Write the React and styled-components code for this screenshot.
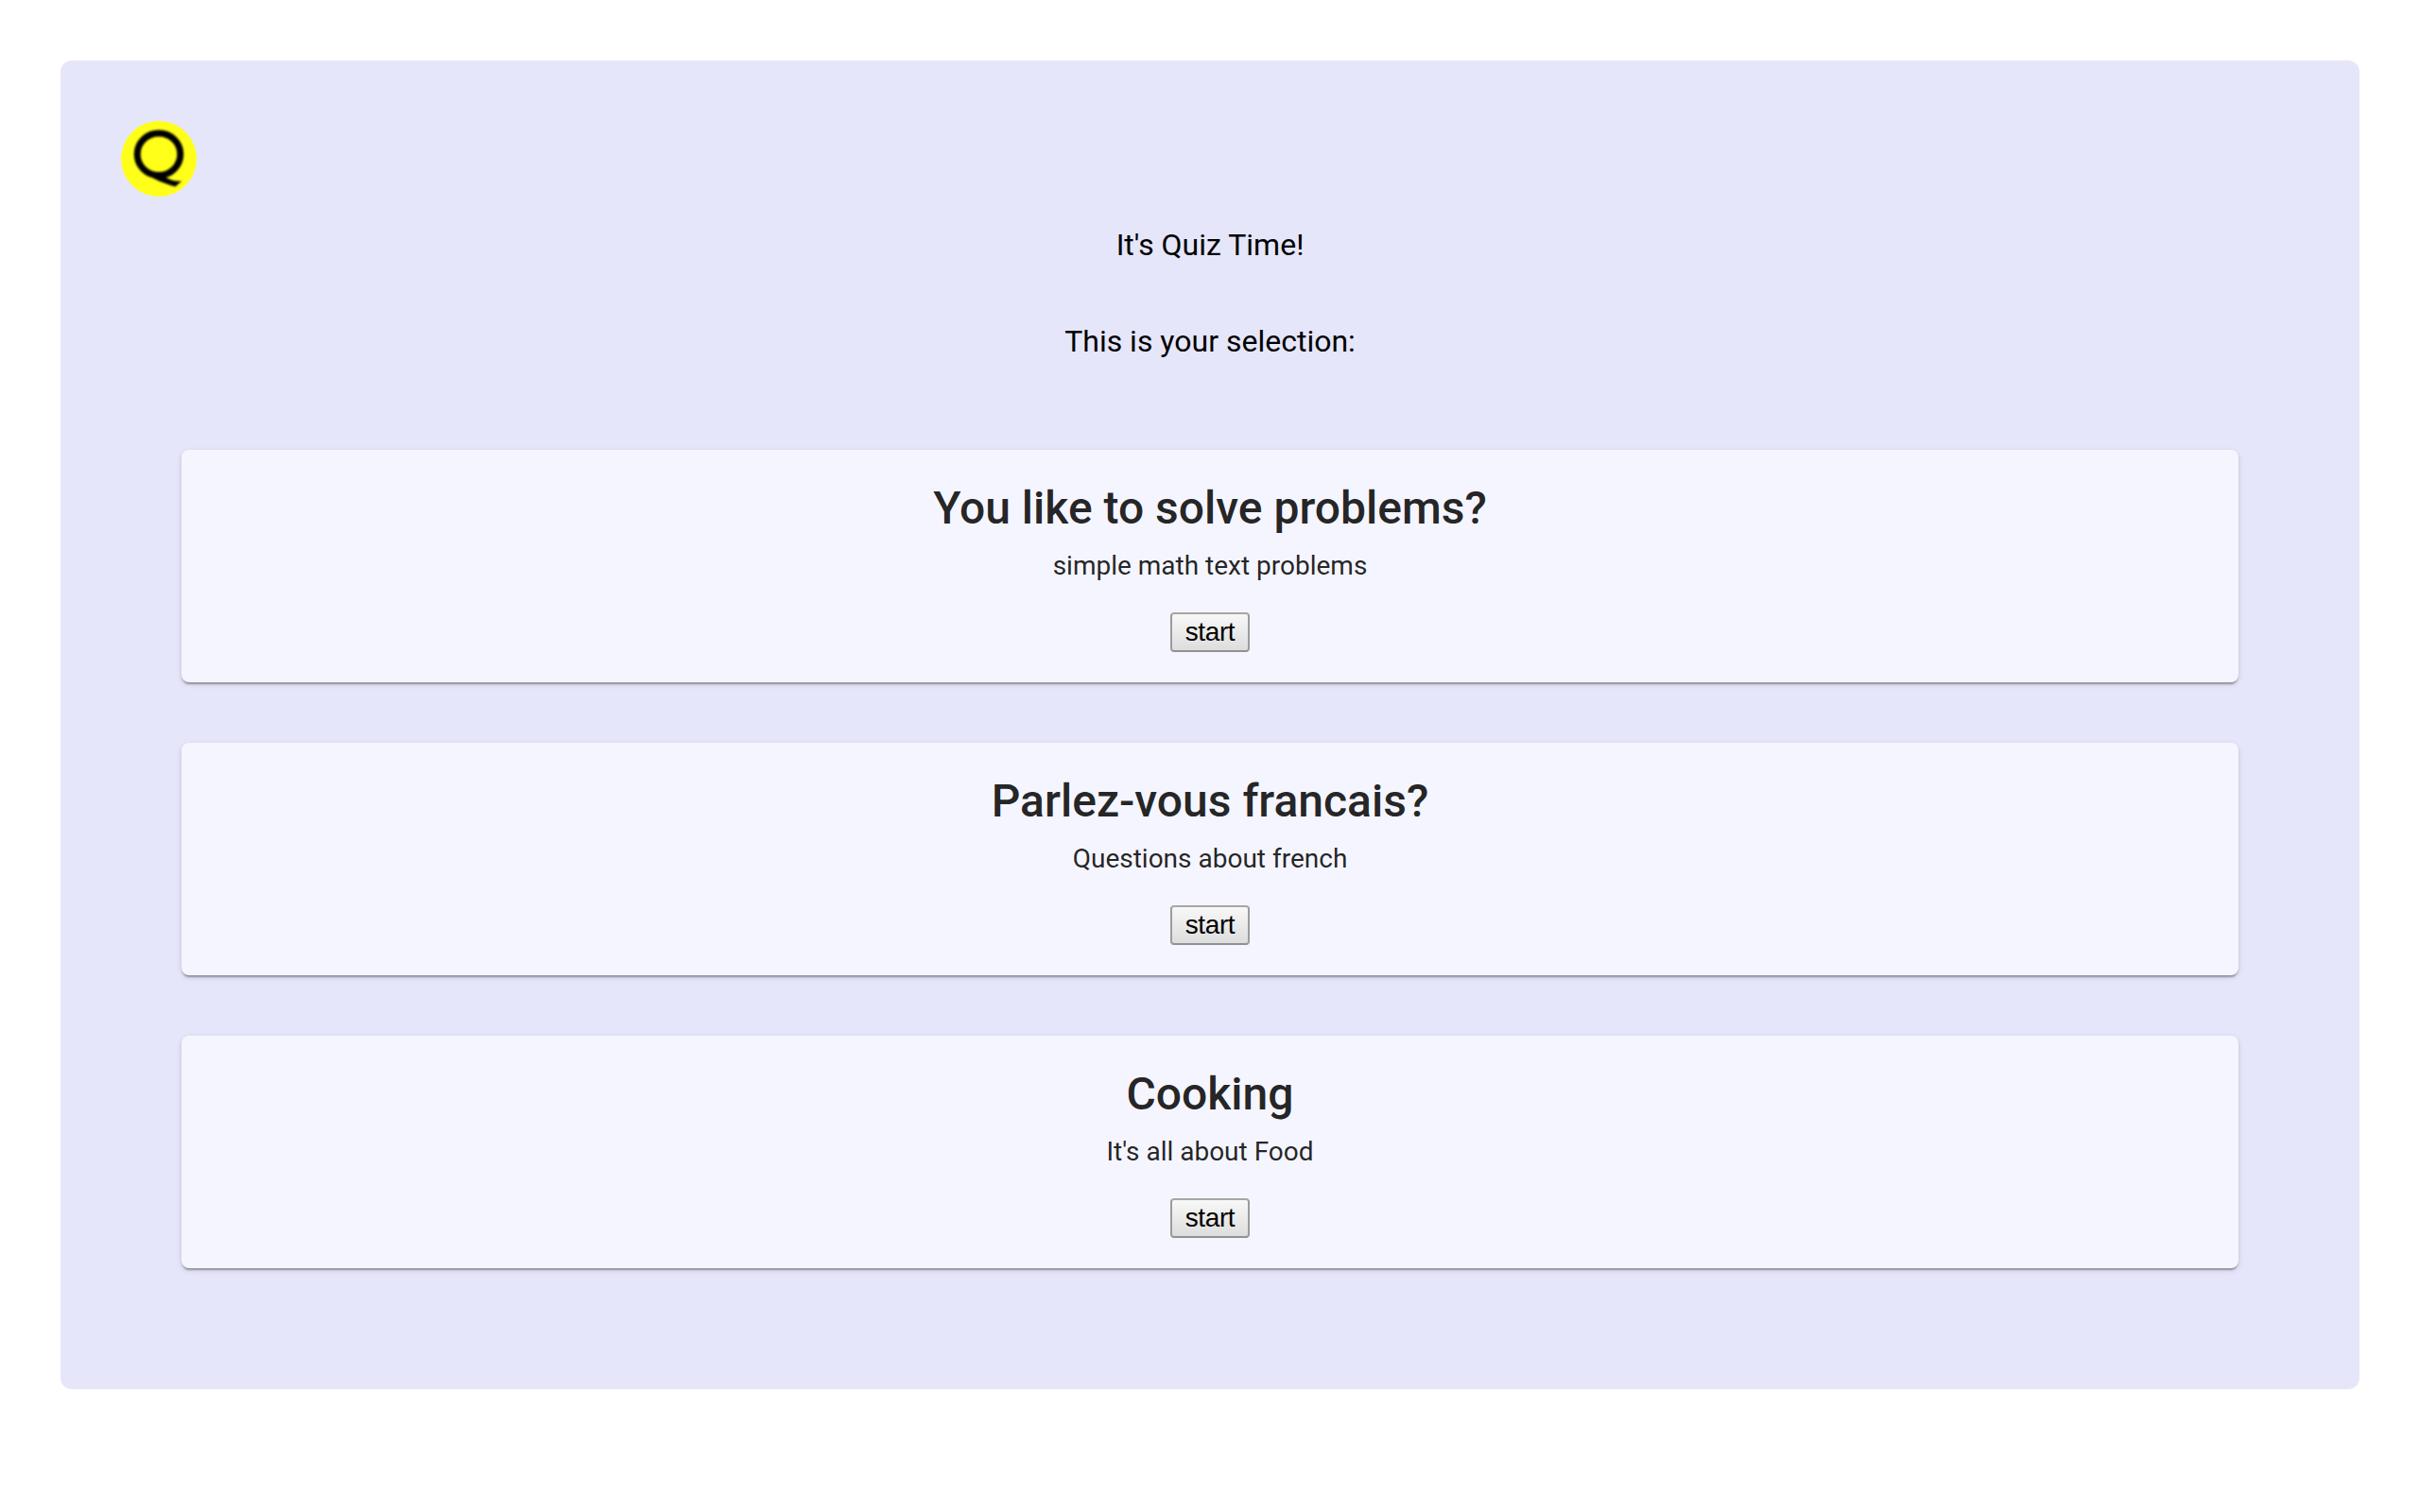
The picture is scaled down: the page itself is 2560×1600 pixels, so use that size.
import React from 'react';
import styled, { createGlobalStyle } from 'styled-components';

const GlobalStyle = createGlobalStyle`
  body {
    margin: 0;
    background: #ffffff;
    font-family: Roboto, "Liberation Sans", sans-serif;
    -webkit-font-smoothing: antialiased;
  }
`;

const Panel = styled.main`
  box-sizing: border-box;
  margin: 64px;
  padding: 64px;
  height: 1406px;
  border-radius: 12px;
  background: #e6e6fa;
  color: #000000;
  text-align: center;
`;

const Logo = styled.svg`
  display: block;
  width: 80px;
  height: 80px;
`;

const LogoMark = styled.g`
  filter: blur(0.9px);
`;

const Intro = styled.p`
  margin: 0;
  padding-top: 32px;
  height: 70px;
  font-size: 32px;
  line-height: 38px;
`;

const QuizList = styled.div`
  display: flex;
  flex-direction: column;
  gap: 64px;
  margin: 64px 64px 0;
`;

const Card = styled.article`
  box-sizing: border-box;
  height: 246px;
  padding: 32px;
  display: flex;
  flex-direction: column;
  align-items: center;
  border-radius: 8px;
  background: #f5f5ff;
  color: rgba(0, 0, 0, 0.87);
  box-shadow:
    0 4px 2px -2px rgba(0, 0, 0, 0.2),
    0 2px 2px 0 rgba(0, 0, 0, 0.14),
    0 2px 6px 0 rgba(0, 0, 0, 0.12);
`;

const Title = styled.h2`
  margin: 0;
  font-size: 48px;
  font-weight: 500;
  line-height: 60px;
`;

const Description = styled.p`
  margin: 11px 0 0;
  font-size: 28px;
  line-height: 40px;
`;

const StartButton = styled.button`
  box-sizing: border-box;
  width: 84px;
  height: 42px;
  margin-top: auto;
  padding: 0;
  border: 2px solid;
  border-color: #a6a6a6 #9c9c9c #919191;
  border-radius: 4px;
  background: linear-gradient(#f8f8f8, #dddddd);
  color: #000000;
  font: 28px/32px "Liberation Sans", Arial, sans-serif;
  letter-spacing: -0.4px;
`;

const quizzes = [
  { title: 'You like to solve problems?', description: 'simple math text problems' },
  { title: 'Parlez-vous francais?', description: 'Questions about french' },
  { title: 'Cooking', description: "It's all about Food" },
];

export default function App() {
  return (
    <>
      <GlobalStyle />
      <Panel>
        <Logo viewBox="0 0 80 80" aria-label="Quiz">
          <circle cx="40" cy="40" r="40" fill="#ffff1a" />
          <LogoMark>
            <ellipse cx="40" cy="35.3" rx="22.8" ry="22.2" fill="none" stroke="#000000" strokeWidth="7" />
            <path d="M20 50C26 58 44 66 57.5 69.5L64.3 63.5C56 64.5 50 61.5 46 58.5L40 55Z" />
          </LogoMark>
        </Logo>
        <Intro>It's Quiz Time!</Intro>
        <Intro>This is your selection:</Intro>
        <QuizList>
          {quizzes.map((quiz) => (
            <Card key={quiz.title}>
              <Title>{quiz.title}</Title>
              <Description>{quiz.description}</Description>
              <StartButton type="button">start</StartButton>
            </Card>
          ))}
        </QuizList>
      </Panel>
    </>
  );
}
